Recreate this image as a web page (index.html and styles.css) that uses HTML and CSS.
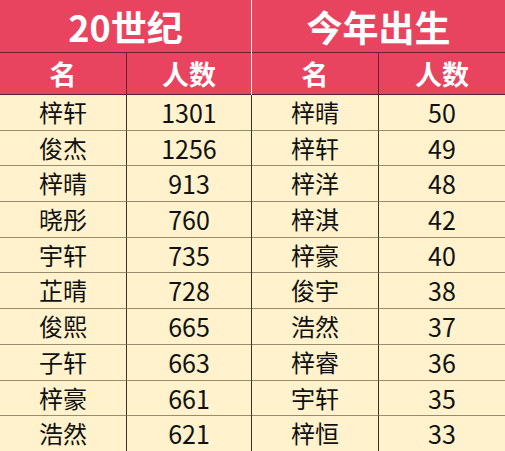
FILE: index.html
```html
<!DOCTYPE html>
<html lang="zh">
<head>
<meta charset="utf-8">
<link rel="stylesheet" href="styles.css">
</head>
<body>
<div class="wrap">
  <div class="tbl left">
    <div class="title">20世纪</div>
    <div class="hd name">名</div><div class="hd">人数</div>
    <div class="c name">梓轩</div><div class="c num">1301</div>
    <div class="c name">俊杰</div><div class="c num">1256</div>
    <div class="c name">梓晴</div><div class="c num">913</div>
    <div class="c name">晓彤</div><div class="c num">760</div>
    <div class="c name">宇轩</div><div class="c num">735</div>
    <div class="c name">芷晴</div><div class="c num">728</div>
    <div class="c name">俊熙</div><div class="c num">665</div>
    <div class="c name">子轩</div><div class="c num">663</div>
    <div class="c name">梓豪</div><div class="c num">661</div>
    <div class="c name">浩然</div><div class="c num">621</div>
  </div>
  <div class="tbl right">
    <div class="title">今年出生</div>
    <div class="hd name">名</div><div class="hd">人数</div>
    <div class="c name">梓晴</div><div class="c num">50</div>
    <div class="c name">梓轩</div><div class="c num">49</div>
    <div class="c name">梓洋</div><div class="c num">48</div>
    <div class="c name">梓淇</div><div class="c num">42</div>
    <div class="c name">梓豪</div><div class="c num">40</div>
    <div class="c name">俊宇</div><div class="c num">38</div>
    <div class="c name">浩然</div><div class="c num">37</div>
    <div class="c name">梓睿</div><div class="c num">36</div>
    <div class="c name">宇轩</div><div class="c num">35</div>
    <div class="c name">梓恒</div><div class="c num">33</div>
  </div>
</div>
</body>
</html>
```
FILE: styles.css
```css
html, body {
  margin: 0;
  padding: 0;
  background: #ffffff;
}
body {
  width: 505px;
  height: 451px;
  overflow: hidden;
  font-family: "Noto Sans CJK SC", "Microsoft YaHei", sans-serif;
}
.wrap {
  display: flex;
  gap: 1px;
  width: 505px;
  background: linear-gradient(to bottom, #ffffff 0, #ffffff 95px, #3a3428 95px, #3a3428 100%);
}
.tbl {
  display: grid;
  align-content: start;
}
.left {
  width: 251px;
  grid-template-columns: 127px 124px;
}
.right {
  width: 253px;
  grid-template-columns: 127px 126px;
}
.title {
  grid-column: span 2;
  box-sizing: border-box;
  height: 53px;
  border-bottom: 1px solid #6a2230;
  background: #e8445f;
  color: #ffffff;
  font-weight: 700;
  font-size: 36px;
  line-height: 52px;
  text-align: center;
}
.hd {
  box-sizing: border-box;
  height: 42px;
  border-bottom: 1px solid #5a1e28;
  background: #e8445f;
  color: #ffffff;
  font-weight: 700;
  font-size: 27px;
  line-height: 41px;
  text-align: center;
}
.hd.name {
  border-right: 1px solid #6a2230;
}
.c {
  box-sizing: border-box;
  height: 35.7px;
  border-bottom: 1px solid #9a8b6a;
  background: #fff2cc;
  color: #111111;
  font-size: 24px;
  line-height: 34px;
  text-align: center;
}
.c.num {
  font-size: 25px;
}
.c.name {
  border-right: 1px solid #3a3428;
}
```
